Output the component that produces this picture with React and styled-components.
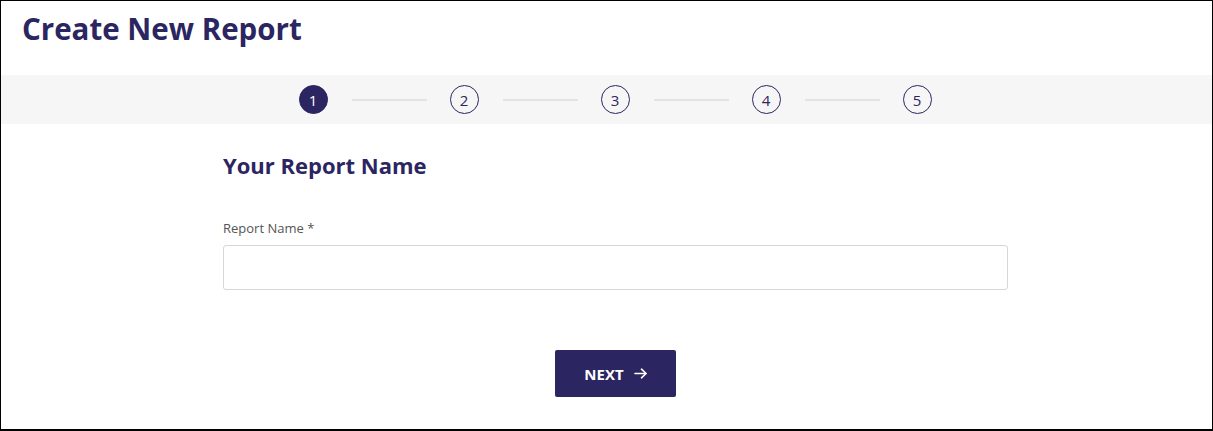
import React from "react";
import styled, { createGlobalStyle } from "styled-components";

const Global = createGlobalStyle`
  html, body { margin: 0; padding: 0; background: #fff; }
  body { font-family: "Open Sans", "Noto Sans", sans-serif; }
  * { box-sizing: border-box; }
`;

const NAVY = "#2b2561";

const Frame = styled.div`
  width: 1213px;
  height: 431px;
  border: 1px solid #000;
  border-bottom-width: 2px;
  background: #fff;
  display: flex;
  flex-direction: column;
`;

const Header = styled.header`
  height: 74px;
  padding: 11px 21px 0;
`;

const Title = styled.h1`
  margin: 0;
  font-size: 29.5px;
  line-height: 34px;
  font-weight: 700;
  color: ${NAVY};
`;

const StepBar = styled.div`
  height: 49px;
  background: #f6f6f6;
  display: flex;
  justify-content: center;
  align-items: center;
  padding-left: 17px;
`;

const Step = styled.div`
  width: 29px;
  height: 29px;
  border-radius: 50%;
  border: 1px solid ${NAVY};
  background: ${(p) => (p.$active ? NAVY : "transparent")};
  color: ${(p) => (p.$active ? "#fff" : NAVY)};
  display: flex;
  align-items: center;
  justify-content: center;
  font-size: 15px;
  flex: none;
`;

const Connector = styled.div`
  width: 75px;
  height: 2px;
  background: #e3e3e3;
  margin: 0 23px 0 24px;
`;

const Content = styled.main`
  width: 785px;
  margin: 0 auto;
  position: relative;
  left: 9px;
  padding-top: 26px;
  display: flex;
  flex-direction: column;
`;

const SectionTitle = styled.h2`
  margin: 0;
  font-size: 22px;
  line-height: 30px;
  font-weight: 700;
  color: ${NAVY};
`;

const Label = styled.label`
  margin-top: 39px;
  font-size: 13px;
  line-height: 18px;
  color: #555;
`;

const Input = styled.input`
  margin-top: 8px;
  height: 45px;
  width: 100%;
  border: 1px solid #d6d6d6;
  border-radius: 3px;
  padding: 0 12px;
  font-family: inherit;
  font-size: 14px;
  outline: none;
`;

const Actions = styled.div`
  display: flex;
  justify-content: center;
  margin-top: 60px;
`;

const NextButton = styled.button`
  width: 121px;
  height: 47px;
  padding: 0;
  background: ${NAVY};
  color: #fff;
  border: none;
  border-radius: 2px;
  font-family: inherit;
  font-size: 15px;
  font-weight: 700;
  display: flex;
  align-items: center;
  justify-content: center;
  gap: 10px;
  cursor: pointer;
`;

const Arrow = () => (
  <svg width="13" height="11" viewBox="0 0 13 11" fill="none" stroke="currentColor" strokeWidth="1.6" strokeLinecap="round" strokeLinejoin="round">
    <path d="M1 5.5h11" />
    <path d="M7.5 1.2L12 5.5L7.5 9.8" />
  </svg>
);

export default function App() {
  const steps = [1, 2, 3, 4, 5];
  return (
    <>
      <Global />
      <Frame>
        <Header>
          <Title>Create New Report</Title>
        </Header>
        <StepBar>
          {steps.map((n, i) => (
            <React.Fragment key={n}>
              <Step $active={n === 1}>{n}</Step>
              {i < steps.length - 1 && <Connector />}
            </React.Fragment>
          ))}
        </StepBar>
        <Content>
          <SectionTitle>Your Report Name</SectionTitle>
          <Label htmlFor="rn">Report Name *</Label>
          <Input id="rn" type="text" />
          <Actions>
            <NextButton>
              NEXT
              <Arrow />
            </NextButton>
          </Actions>
        </Content>
      </Frame>
    </>
  );
}
